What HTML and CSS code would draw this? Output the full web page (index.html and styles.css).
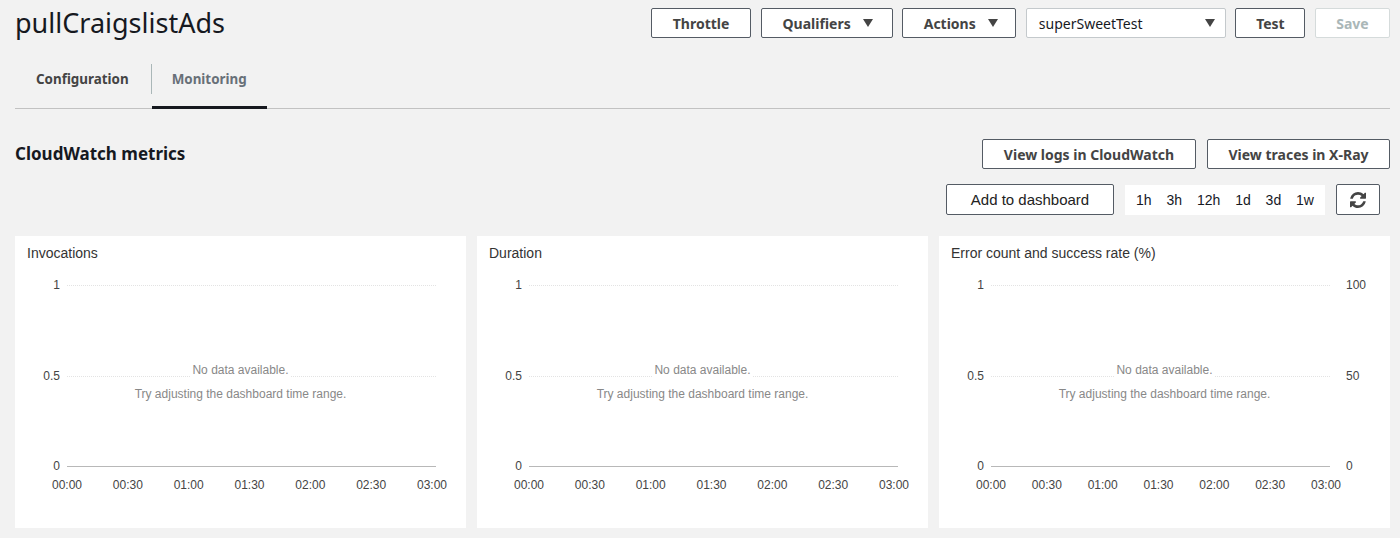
FILE: index.html
```html
<!DOCTYPE html>
<html lang="en">
<head>
<meta charset="utf-8">
<title>pullCraigslistAds</title>
<link rel="stylesheet" href="styles.css">
</head>
<body>
<div class="page">
  <header class="top">
    <h1 class="title">pullCraigslistAds</h1>
    <div class="top-actions">
      <button class="btn btn-throttle">Throttle</button>
      <button class="btn btn-qual">Qualifiers <span class="caret"></span></button>
      <button class="btn btn-actions">Actions <span class="caret"></span></button>
      <div class="select"><span>superSweetTest</span><span class="caret"></span></div>
      <button class="btn btn-test">Test</button>
      <button class="btn btn-save" disabled>Save</button>
    </div>
  </header>

  <nav class="tabs">
    <div class="tab tab-config">Configuration</div>
    <span class="tab-sep"></span>
    <div class="tab tab-active">Monitoring</div>
  </nav>

  <section class="metrics-head">
    <h2 class="section-title">CloudWatch metrics</h2>
    <div class="tools">
      <div class="tool-row">
        <button class="btn btn-logs">View logs in CloudWatch</button>
        <button class="btn btn-traces">View traces in X-Ray</button>
      </div>
      <div class="tool-row tool-row2">
        <button class="btn btn-dash">Add to dashboard</button>
        <div class="range">
          <span>1h</span><span>3h</span><span>12h</span><span>1d</span><span>3d</span><span>1w</span>
        </div>
        <button class="btn btn-refresh" aria-label="Refresh">
          <svg width="16" height="16" viewBox="0 0 1536 1536"><path fill="#444" d="M1511 928q0 5-1 7q-64 268-268 434.5T764 1536q-146 0-282.5-55T238 1324l-129 129q-19 19-45 19t-45-19t-19-45V960q0-26 19-45t45-19h448q26 0 45 19t19 45t-19 45l-137 137q71 66 161 102t187 36q134 0 250-65t186-179q11-17 53-117q8-23 30-23h192q13 0 22.5 9.5t9.5 22.5zm25-800v448q0 26-19 45t-45 19h-448q-26 0-45-19t-19-45t19-45l138-138Q969 256 768 256q-134 0-250 65T332 500q-11 17-53 117q-8 23-30 23H50q-13 0-22.5-9.5T18 608v-7q65-268 270-434.5T768 0q146 0 284 55.5T1297 212l130-129q19-19 45-19t45 19t19 45z"/></svg>
        </button>
      </div>
    </div>
  </section>

  <div class="cards">
    <div class="card">
      <div class="card-title">Invocations</div>
      <div class="chart">
        <div class="yrow"><span class="yl">1</span><span class="gl"></span></div>
        <div class="yrow"><span class="yl">0.5</span><span class="gl"></span></div>
        <div class="yrow"><span class="yl">0</span><span class="gl axis"></span></div>
        <div class="xrow"><span class="xpad"></span><div class="xlabels"><span>00:00</span><span>00:30</span><span>01:00</span><span>01:30</span><span>02:00</span><span>02:30</span><span>03:00</span></div></div>
        <div class="nodata"><span class="nd1">No data available.</span><span class="nd2">Try adjusting the dashboard time range.</span></div>
      </div>
    </div>
    <div class="card">
      <div class="card-title">Duration</div>
      <div class="chart">
        <div class="yrow"><span class="yl">1</span><span class="gl"></span></div>
        <div class="yrow"><span class="yl">0.5</span><span class="gl"></span></div>
        <div class="yrow"><span class="yl">0</span><span class="gl axis"></span></div>
        <div class="xrow"><span class="xpad"></span><div class="xlabels"><span>00:00</span><span>00:30</span><span>01:00</span><span>01:30</span><span>02:00</span><span>02:30</span><span>03:00</span></div></div>
        <div class="nodata"><span class="nd1">No data available.</span><span class="nd2">Try adjusting the dashboard time range.</span></div>
      </div>
    </div>
    <div class="card">
      <div class="card-title">Error count and success rate (%)</div>
      <div class="chart chart-dual">
        <div class="yrow"><span class="yl">1</span><span class="gl"></span><span class="yr">100</span></div>
        <div class="yrow"><span class="yl">0.5</span><span class="gl"></span><span class="yr">50</span></div>
        <div class="yrow"><span class="yl">0</span><span class="gl axis"></span><span class="yr">0</span></div>
        <div class="xrow"><span class="xpad"></span><div class="xlabels"><span>00:00</span><span>00:30</span><span>01:00</span><span>01:30</span><span>02:00</span><span>02:30</span><span>03:00</span></div></div>
        <div class="nodata"><span class="nd1">No data available.</span><span class="nd2">Try adjusting the dashboard time range.</span></div>
      </div>
    </div>
  </div>
</div>
</body>
</html>
```

FILE: styles.css
```css
* { box-sizing: border-box; }

body {
  margin: 0;
  background: #f2f2f2;
  font-family: "Noto Sans", "Liberation Sans", sans-serif;
  color: #16191f;
}

.page {
  padding: 8px 10px 0 15px;
}

/* ---------- header ---------- */
.top {
  display: flex;
  justify-content: space-between;
  align-items: center;
  height: 30px;
}

.title {
  margin: 0;
  font-size: 27px;
  font-weight: 400;
  line-height: 30px;
  color: #16191f;
}

.top-actions {
  display: flex;
  align-items: center;
  gap: 9.6px;
}

.btn {
  display: inline-flex;
  align-items: center;
  justify-content: center;
  height: 30px;
  padding: 0 20px;
  background: #fff;
  border: 1px solid #545b64;
  border-radius: 2px;
  font-family: "Noto Sans", "Liberation Sans", sans-serif;
  font-size: 14px;
  font-weight: 700;
  color: #444;
  white-space: nowrap;
}

.btn-throttle { width: 100px; }
.btn-qual { width: 132px; gap: 12px; padding: 0 18px 0 20px; }
.btn-actions { width: 114px; gap: 12px; padding: 0 17px 0 20px; }
.btn-test { width: 70px; padding: 0; }
.btn-save {
  width: 75px;
  padding: 0;
  border-color: #d5dbdb;
  color: #aab7b8;
}

.caret {
  display: inline-block;
  width: 0;
  height: 0;
  border-left: 5px solid transparent;
  border-right: 5px solid transparent;
  border-top: 8px solid #444;
}

.select {
  display: flex;
  align-items: center;
  justify-content: space-between;
  width: 200px;
  height: 30px;
  padding: 0 10px 0 12px;
  background: #fff;
  border: 1px solid #c4c9cc;
  border-radius: 2px;
  font-size: 14px;
  color: #16191f;
}

/* ---------- tabs ---------- */
.tabs {
  display: flex;
  align-items: flex-start;
  margin-top: 11px;
  border-bottom: 1px solid #c2c2c2;
}

.tab {
  padding: 15px 20px 12px;
  line-height: 30px;
  font-size: 13.4px;
  font-weight: 700;
  border-bottom: 3px solid transparent;
  margin-bottom: -1px;
}

.tab-config {
  padding-left: 21px;
  padding-right: 22px;
  color: #444;
}

.tab-active {
  color: #687078;
  border-bottom-color: #16191f;
}

.tab-sep {
  width: 1px;
  height: 30px;
  margin-top: 15px;
  background: #aab7b8;
}

/* ---------- metrics header ---------- */
.metrics-head {
  display: flex;
  justify-content: space-between;
  align-items: flex-start;
  margin-top: 30px;
}

.section-title {
  margin: 0;
  font-size: 17px;
  font-weight: 700;
  line-height: 30px;
  color: #16191f;
}

.tools {
  display: flex;
  flex-direction: column;
  align-items: flex-end;
  gap: 15px;
}

.tool-row {
  display: flex;
  align-items: center;
  gap: 11px;
}

.tool-row2 {
  margin-right: 10px;
  gap: 11px;
}

.btn-logs { width: 214px; }
.btn-traces { width: 183px; }

.btn-dash {
  width: 168px;
  height: 31px;
  font-family: "Liberation Sans", Arial, sans-serif;
  font-size: 15px;
  font-weight: 400;
  color: #222;
  padding: 0;
}

.range {
  display: flex;
  align-items: center;
  justify-content: space-between;
  width: 200px;
  height: 30px;
  padding: 0 11px;
  background: #fff;
  font-family: "Liberation Sans", Arial, sans-serif;
  font-size: 14px;
  color: #16191f;
}

.btn-refresh {
  width: 44px;
  height: 31px;
  padding: 0;
}

/* ---------- cards ---------- */
.cards {
  display: grid;
  grid-template-columns: repeat(3, 1fr);
  gap: 11px;
  margin-top: 21px;
}

.card {
  background: #fff;
  height: 292px;
  padding: 9px 0 0 12px;
  font-family: "Liberation Sans", Arial, sans-serif;
}

.card-title {
  font-size: 14px;
  line-height: 17px;
  color: #333;
}

.chart {
  position: relative;
  margin-top: 16px;
  padding-right: 30px;
  display: flex;
  flex-direction: column;
  gap: 77px;
  font-size: 12px;
  color: #444;
}

.chart-dual {
  padding-right: 23px;
}

.yrow {
  display: grid;
  grid-template-columns: 33px 1fr;
  column-gap: 7px;
  align-items: center;
  height: 14px;
  line-height: 14px;
}

.chart-dual .yrow {
  grid-template-columns: 33px 1fr 30px;
}

.yrow:nth-child(3) { margin-top: -1px; }

.yl { text-align: right; }

.yr { padding-left: 9px; }

.gl {
  height: 0;
  border-top: 1px dotted #e3e3e3;
}

.gl.axis {
  border-top: 1px solid #b8b8b8;
}

.xrow {
  display: grid;
  grid-template-columns: 33px 1fr;
  column-gap: 7px;
  margin-top: -72px;
  line-height: 14px;
}

.chart-dual .xrow {
  grid-template-columns: 33px 1fr 30px;
}

.xlabels {
  display: flex;
  justify-content: space-between;
  margin: 0 -11px 0 -15px;
}

.nodata {
  position: absolute;
  top: 85px;
  left: 0;
  right: 12px;
  display: flex;
  flex-direction: column;
  align-items: center;
  gap: 10px;
  line-height: 14px;
  color: #888;
  font-size: 12px;
}

.nd1 {
  background: #fff;
  padding: 0 2px;
}
```
